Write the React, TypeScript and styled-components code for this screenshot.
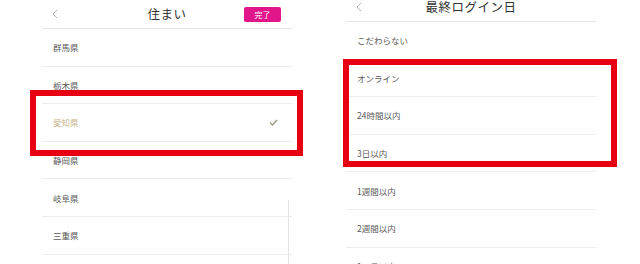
import styled, { createGlobalStyle } from "styled-components";

const GlobalStyle = createGlobalStyle`
  html, body {
    margin: 0;
    padding: 0;
    background: #ffffff;
  }
  body {
    font-family: "Noto Sans CJK JP", "Noto Sans", sans-serif;
    color: #333;
  }
`;

const Page = styled.div`
  width: 640px;
  height: 264px;
  overflow: hidden;
  display: flex;
  align-items: flex-start;
  background: #fff;
`;

const Panel = styled.div<{ $left: number; $top: number }>`
  position: relative;
  width: 250px;
  margin-left: ${(p) => p.$left}px;
  margin-top: ${(p) => p.$top}px;
  display: flex;
  flex-direction: column;
`;

const Header = styled.div`
  height: 28px;
  display: grid;
  grid-template-columns: 40px 1fr 40px;
  align-items: center;
  border-bottom: 1px solid #e6e6e6;
`;

const Back = styled.div`
  display: flex;
  align-items: center;
  padding-left: 10px;
`;

const Title = styled.div`
  text-align: center;
  font-size: 12.5px;
  line-height: 1;
  letter-spacing: 0.5px;
  color: #333;
`;

const Done = styled.div`
  justify-self: end;
  margin-right: 11px;
  width: 37px;
  height: 15px;
  border-radius: 2px;
  background: #e2168b;
  color: #fff;
  font-size: 8px;
  display: flex;
  align-items: center;
  justify-content: center;
`;

const List = styled.div`
  display: flex;
  flex-direction: column;
`;

const Row = styled.div<{ $selected?: boolean }>`
  height: 36.6px;
  display: flex;
  align-items: center;
  justify-content: space-between;
  padding: 0 14px 0 11px;
  border-bottom: 1px solid #ececec;
  font-size: 8.5px;
  color: ${(p) => (p.$selected ? "#c9b48c" : "#5a5a5a")};
`;

const Highlight = styled.div<{
  $x: number;
  $y: number;
  $w: number;
  $h: number;
}>`
  position: absolute;
  left: ${(p) => p.$x}px;
  top: ${(p) => p.$y}px;
  width: ${(p) => p.$w}px;
  height: ${(p) => p.$h}px;
  box-sizing: border-box;
  border: 6px solid #e60012;
  pointer-events: none;
`;

const EdgeLine = styled.div`
  position: absolute;
  left: 246px;
  top: 200px;
  width: 1px;
  height: 80px;
  background: #e4e4e4;
`;

function Chevron() {
  return (
    <svg width="6" height="10" viewBox="0 0 6 10">
      <polyline
        points="5,1 1,5 5,9"
        fill="none"
        stroke="#b0b0b0"
        strokeWidth="1"
      />
    </svg>
  );
}

function Check() {
  return (
    <svg width="9" height="7" viewBox="0 0 9 7">
      <polyline
        points="1,3.5 3.5,6 8,1"
        fill="none"
        stroke="#9c9480"
        strokeWidth="1.3"
      />
    </svg>
  );
}

const prefectures = ["群馬県", "栃木県", "愛知県", "静岡県", "岐阜県", "三重県"];
const logins = [
  "こだわらない",
  "オンライン",
  "24時間以内",
  "3日以内",
  "1週間以内",
  "2週間以内",
  "1ヶ月以内",
];

export default function App() {
  return (
    <Page>
      <GlobalStyle />
      <Panel $left={42} $top={0}>
        <Header>
          <Back>
            <Chevron />
          </Back>
          <Title>住まい</Title>
          <Done>完了</Done>
        </Header>
        <List>
          {prefectures.map((name) => (
            <Row key={name} $selected={name === "愛知県"}>
              {name}
              {name === "愛知県" && <Check />}
            </Row>
          ))}
        </List>
        <EdgeLine />
        <Highlight $x={-12} $y={90} $w={273} $h={66} />
      </Panel>
      <Panel $left={54} $top={-7}>
        <Header>
          <Back>
            <Chevron />
          </Back>
          <Title>最終ログイン日</Title>
          <div />
        </Header>
        <List>
          {logins.map((name) => (
            <Row key={name}>{name}</Row>
          ))}
        </List>
        <Highlight $x={-3} $y={66} $w={274} $h={108} />
      </Panel>
    </Page>
  );
}
